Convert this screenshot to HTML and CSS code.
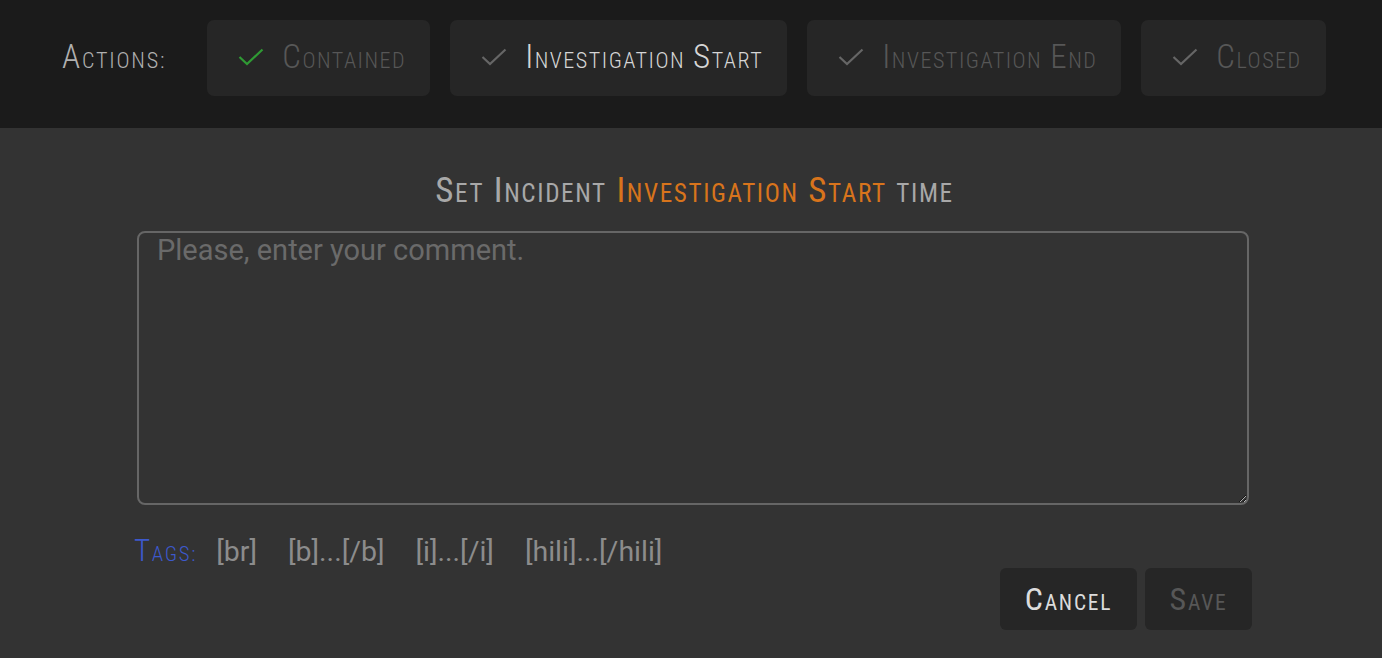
FILE: index.html
```html
<!DOCTYPE html>
<html>
<head>
<meta charset="utf-8">
<link rel="stylesheet" href="styles.css">
</head>
<body>
<header class="actions-bar">
  <span class="actions-label">A<span class="sc">ctions:</span></span>
  <button class="action action-done"><svg class="check" viewBox="0 0 26 18"><path d="M1.5 9 L9 16 L24.5 1.5"/></svg><span class="action-text dim">C<span class="sc">ontained</span></span></button>
  <button class="action"><svg class="check" viewBox="0 0 26 18"><path d="M1.5 9 L9 16 L24.5 1.5"/></svg><span class="action-text bright">I<span class="sc">nvestigation</span> S<span class="sc">tart</span></span></button>
  <button class="action"><svg class="check" viewBox="0 0 26 18"><path d="M1.5 9 L9 16 L24.5 1.5"/></svg><span class="action-text dim">I<span class="sc">nvestigation</span> E<span class="sc">nd</span></span></button>
  <button class="action"><svg class="check" viewBox="0 0 26 18"><path d="M1.5 9 L9 16 L24.5 1.5"/></svg><span class="action-text dim">C<span class="sc">losed</span></span></button>
</header>
<main class="panel">
  <h1 class="title">S<span class="sc">et</span> I<span class="sc">ncident</span> <span class="accent">I<span class="sc">nvestigation</span> S<span class="sc">tart</span></span> <span class="sc">time</span></h1>
  <textarea class="comment" placeholder="Please, enter your comment."></textarea>
  <div class="tags">
    <span class="tags-label">T<span class="sc">ags:</span></span>
    <span class="tag">[br]</span>
    <span class="tag">[b]...[/b]</span>
    <span class="tag">[i]...[/i]</span>
    <span class="tag">[hili]...[/hili]</span>
  </div>
  <div class="buttons">
    <button class="btn btn-cancel">C<span class="sc">ancel</span></button>
    <button class="btn btn-save">S<span class="sc">ave</span></button>
  </div>
</main>
</body>
</html>
```
FILE: styles.css
```css
html, body {
  margin: 0;
  padding: 0;
}
body {
  background: #333333;
  font-family: Roboto, "Liberation Sans", sans-serif;
  width: 1382px;
  height: 658px;
  overflow: hidden;
}
.sc {
  font-size: 0.67em;
  text-transform: uppercase;
}
.actions-bar {
  height: 128px;
  background: #1b1b1b;
  display: flex;
  align-items: flex-start;
  padding: 20px 0 0 62px;
  box-sizing: border-box;
  gap: 20px;
}
.actions-label {
  font-family: Roboto, sans-serif;
  font-stretch: condensed;
  font-size: 33px;
  font-weight: 300;
  letter-spacing: 1.8px;
  color: #b0b0b0;
  line-height: 76px;
  margin-top: -1px;
  margin-right: 21px;
  white-space: nowrap;
}
.action {
  height: 76px;
  background: #262626;
  border: none;
  border-radius: 7px;
  display: flex;
  align-items: center;
  padding: 0 24px 0 31px;
  gap: 18px;
  font-family: Roboto, sans-serif;
  white-space: nowrap;
}
.check {
  width: 26px;
  height: 18px;
  fill: none;
  stroke: #666666;
  stroke-width: 2.2;
  margin-top: -2px;
}
.action-done .check {
  stroke: #2f9a34;
}
.action-text {
  font-stretch: condensed;
  font-size: 33px;
  font-weight: 300;
  letter-spacing: 1.5px;
  word-spacing: -1px;
  line-height: 40px;
}
.dim { color: #575757; }
.bright { color: #d6d6d6; }
.panel {
  padding: 0 130px 0 137px;
  display: flex;
  flex-direction: column;
}
.title {
  margin: 0;
  padding-top: 43px;
  height: 60px;
  text-align: center;
  font-family: Roboto, sans-serif;
  font-stretch: condensed;
  font-size: 35px;
  font-weight: 400;
  letter-spacing: 1.6px;
  color: #a8a8a8;
  line-height: 40px;
}
.title .sc {
  font-size: 0.72em;
}
.accent { color: #d8741c; }
.comment {
  width: 1112px;
  height: 274px;
  box-sizing: border-box;
  background: #333333;
  border: 2px solid #666666;
  border-radius: 8px;
  color: #cccccc;
  font-family: Roboto, sans-serif;
  font-size: 29px;
  padding: 0 18px;
  outline: none;
}
.comment::placeholder {
  color: #6a6a6a;
}
.tags {
  display: flex;
  align-items: baseline;
  gap: 31px;
  margin: 27px 0 0 -3px;
  height: 37px;
  white-space: nowrap;
}
.tags-label {
  font-stretch: condensed;
  font-size: 31px;
  font-weight: 300;
  letter-spacing: 1.7px;
  color: #3d59cc;
  margin-right: -12px;
}
.tag {
  font-size: 28.5px;
  color: #8c8c8c;
}
.buttons {
  display: flex;
  justify-content: flex-end;
  gap: 8px;
  margin-top: -1px;
  margin-right: 0;
}
.btn {
  height: 62px;
  border: none;
  border-radius: 6px;
  background: #262626;
  font-family: Roboto, sans-serif;
  font-stretch: condensed;
  font-size: 32px;
  font-weight: 400;
  letter-spacing: 1.8px;
  white-space: nowrap;
  padding: 0;
}
.btn-cancel {
  width: 137px;
  color: #dcdcdc;
}
.btn-save {
  width: 107px;
  color: #575757;
}
```
